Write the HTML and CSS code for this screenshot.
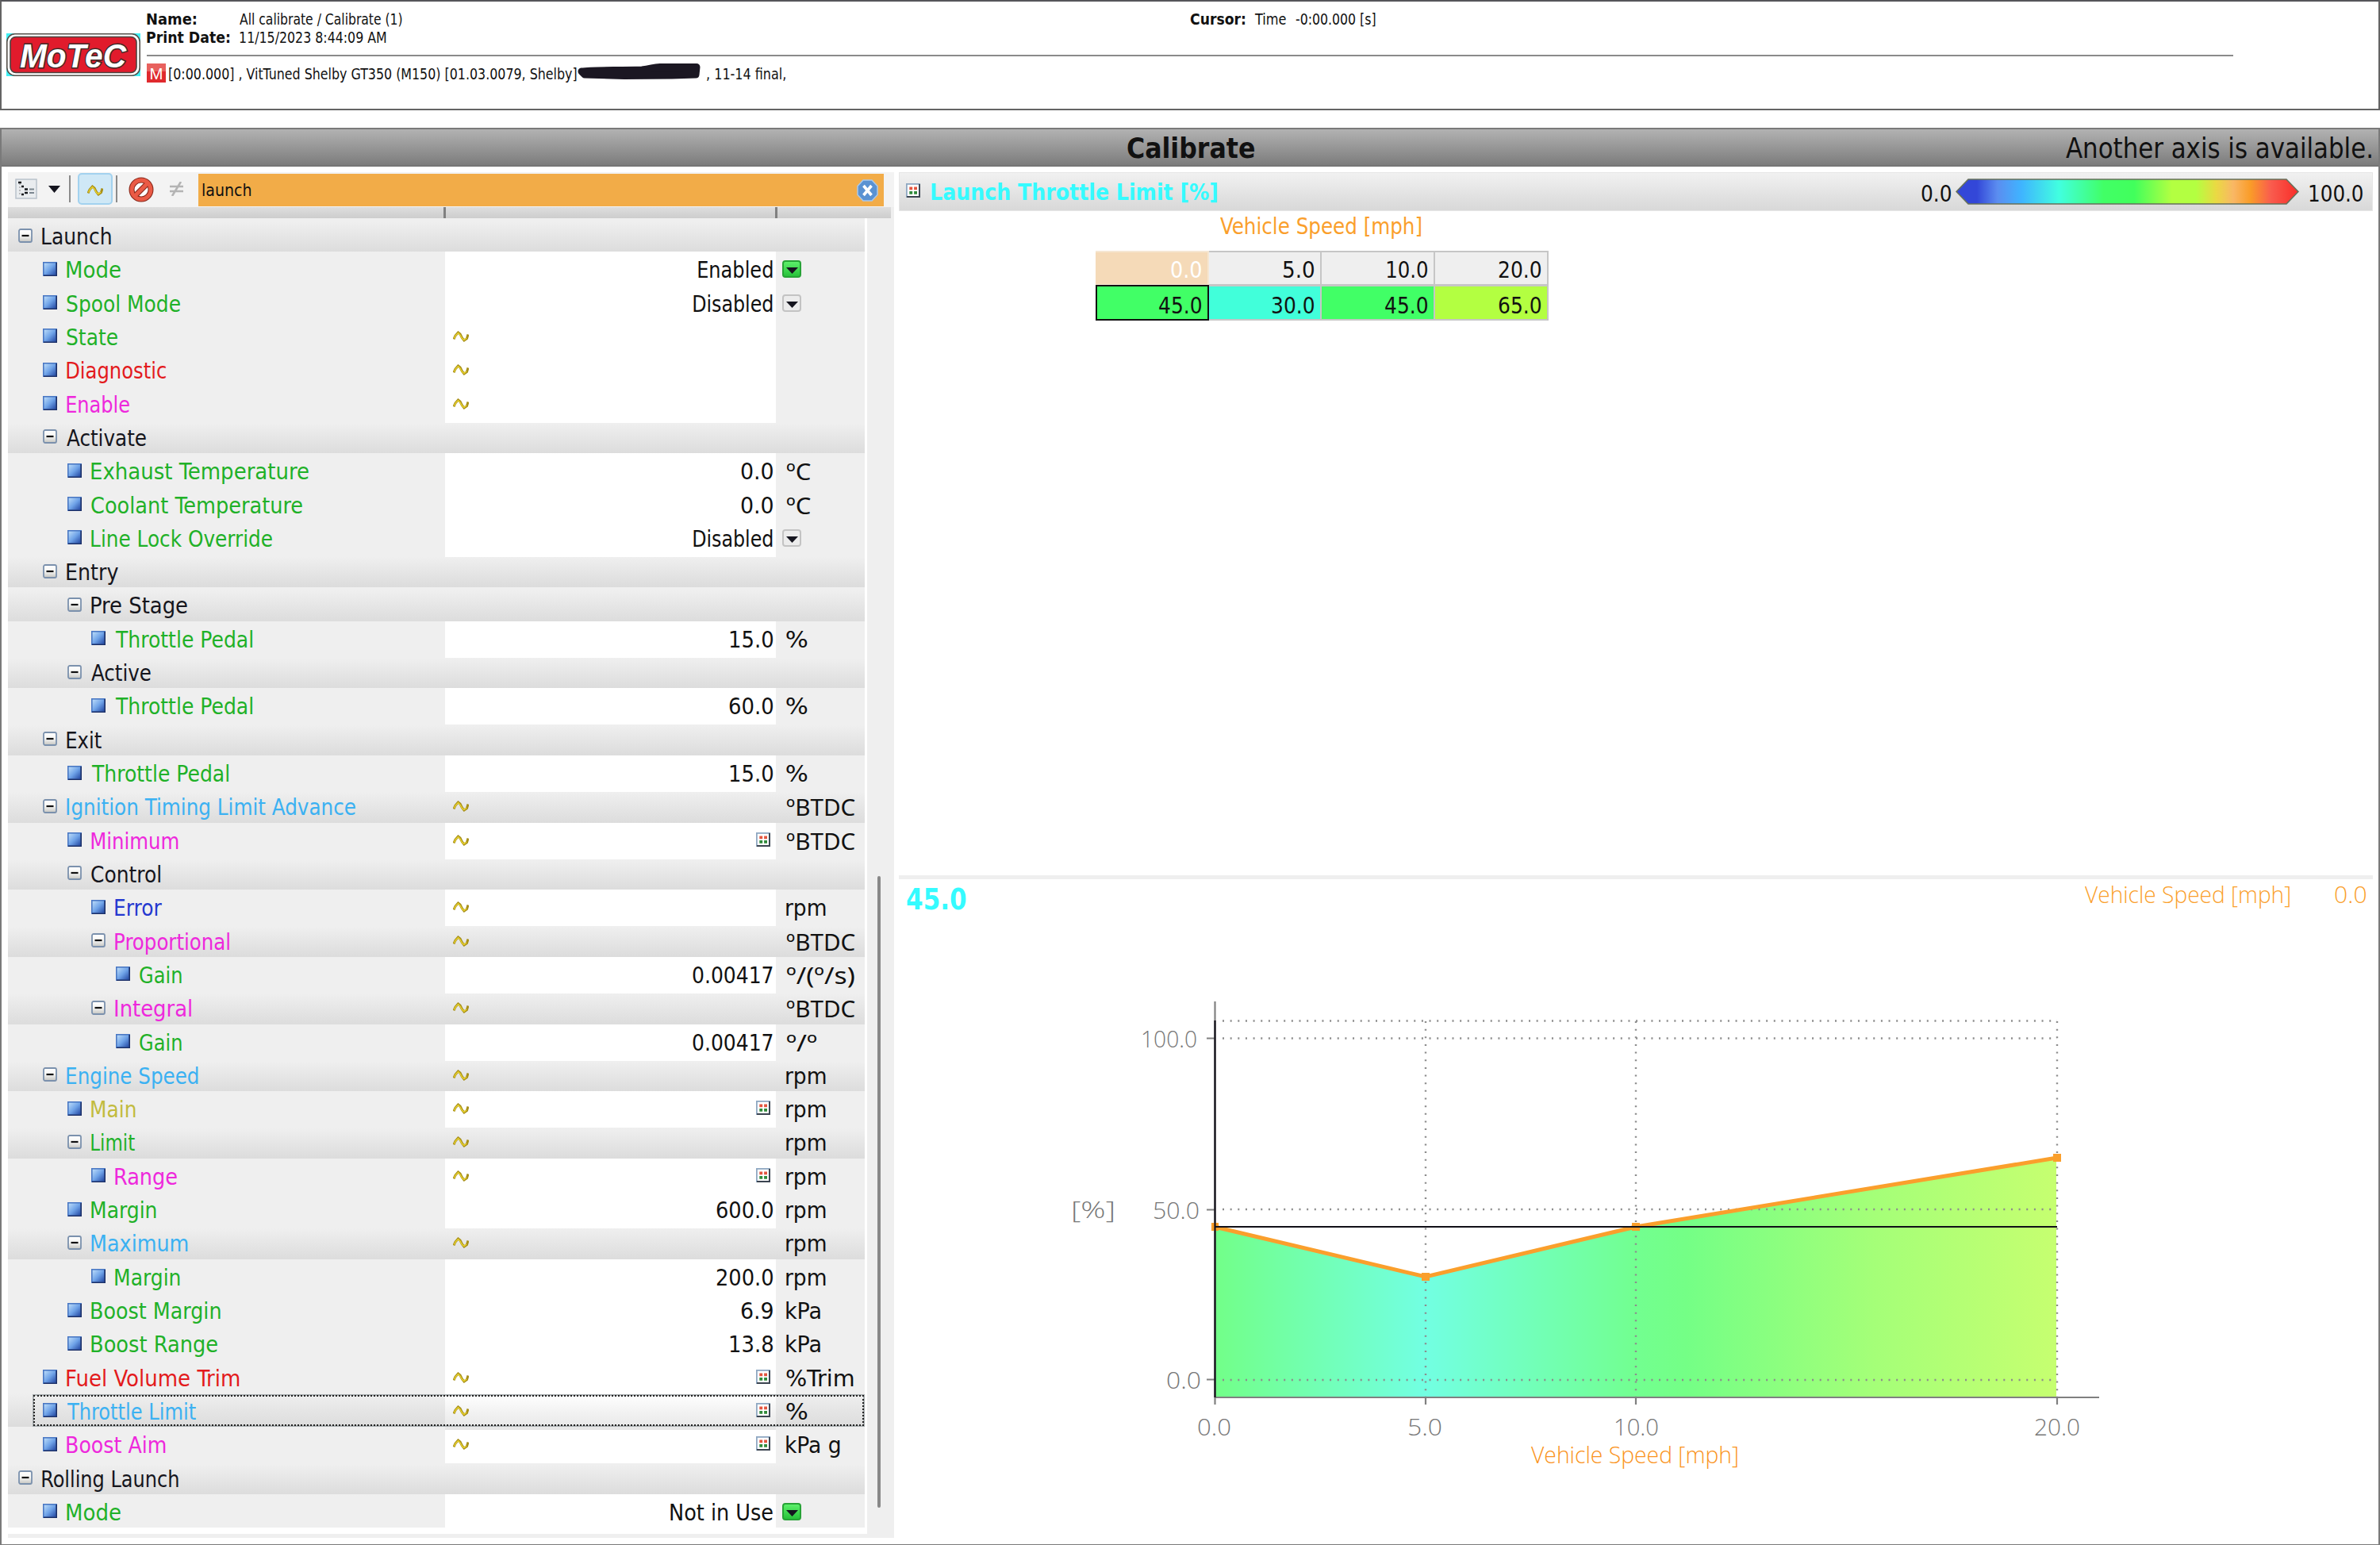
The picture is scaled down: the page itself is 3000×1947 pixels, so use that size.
FILE: index.html
```html
<!DOCTYPE html>
<html lang="en">
<head>
  <meta charset="UTF-8" />
  <title>Calibrate</title>
  <link rel="stylesheet" href="styles.css">
</head>
<body>
  <!-- Shared icons -->
  <svg class="defs" width="0" height="0">
    <defs>
      <linearGradient id="blueGrad" x1="0" y1="0" x2="1" y2="1">
        <stop offset="0" stop-color="#c4e2fb"/>
        <stop offset="0.5" stop-color="#6fa3e8"/>
        <stop offset="1" stop-color="#1c3f9c"/>
      </linearGradient>
      <linearGradient id="boxGrad" x1="0" y1="0" x2="0" y2="1">
        <stop offset="0" stop-color="#fff"/>
        <stop offset="0.5" stop-color="#f6f6f4"/>
        <stop offset="1" stop-color="#c4c4c0"/>
      </linearGradient>
    </defs>
    <symbol id="i-leaf" viewBox="0 0 18 18">
      <rect x="0.8" y="0.8" width="16.4" height="16.4" fill="url(#blueGrad)" stroke="#4a78c4" stroke-width="1.6"/>
      <path d="M1 17.2H17.2V1" fill="none" stroke="#1b2f68" stroke-width="1.6"/>
    </symbol>
    <symbol id="i-minus" viewBox="0 0 18 18">
      <rect x="1" y="1" width="16" height="16" rx="2" fill="url(#boxGrad)" stroke="#7b91ad" stroke-width="1.8"/>
      <path d="M4.5 9H13.5" stroke="#111" stroke-width="2.2"/>
    </symbol>
    <symbol id="i-wave" viewBox="0 0 20 14">
      <path d="M1 10.5L3 6L6.500 2L9 4L11.500 9L14 12L17.500 9.500L19 4.500" fill="none" stroke="#a8901a" stroke-width="3"/>
      <path d="M1.500 9.500L3.500 5.500L6.500 2.500L9 5L11.500 9.500L14 11.500L17 9" fill="none" stroke="#f0da30" stroke-width="1.200"/>
    </symbol>
    <symbol id="i-grid" viewBox="0 0 18 18">
      <rect x="0.900" y="0.900" width="16.200" height="16.200" fill="#fff" stroke="#8fa8c2" stroke-width="1.800"/>
      <path d="M1 17H17V1" fill="none" stroke="#3b4450" stroke-width="1.900"/>
      <path d="M4.300 4.500h3.900v3.700h-3.900zM10.100 4.500h3.900v3.700h-3.900z" fill="#e2553f"/>
      <path d="M4.300 10.100h3.900v3.700h-3.900zM10.100 10.100h3.900v3.700h-3.900z" fill="#2f8a3a"/>
    </symbol>
  </svg>

  <!-- Print header -->
  <header class="print-head">
    <svg class="logo" width="169" height="54" viewBox="0 0 169 54">
      <rect width="169" height="54" fill="#3ff0f5"/>
      <rect x="0.8" y="0.800" width="167.400" height="52.400" rx="10" fill="#fff" stroke="#55504a" stroke-width="1.600"/>
      <rect x="5" y="4.500" width="159" height="45" rx="7" fill="#e11b2c" stroke="#4c4440" stroke-width="1.600"/>
      <text class="logo-text" x="17" y="42.500" textLength="134" lengthAdjust="spacingAndGlyphs">MoTeC</text>
    </svg>
    <div class="head-info">
      <div class="meta">
        <b class="k" data-w="62">Name:</b><span data-w="205">All calibrate / Calibrate (1)</span>
        <b class="k" data-w="104">Print Date:</b><span data-w="185">11/15/2023 8:44:09 AM</span>
      </div>
      <div class="cursor"><b data-w="69">Cursor:</b><span data-w="40">Time</span><span data-w="101">-0:00.000 [s]</span></div>
      <div class="session">
        <svg width="24" height="24" viewBox="0 0 24 24"><rect width="24" height="24" fill="#e02a2e"/><rect width="24" height="10" fill="#ee8e86" opacity="0.550"/><text class="m-text" x="3.500" y="20" textLength="17" lengthAdjust="spacingAndGlyphs">M</text></svg>
        <span data-w="514">[0:00.000] , VitTuned Shelby GT350 (M150) [01.03.0079, Shelby]</span>
        <svg class="marker" width="157" height="22" viewBox="0 0 157 22"><path d="M6 10C20 8 50 9 82 8C94 7 98 4 108 4.500H151L150 14L120 15L60 15.500L10 14Z" fill="#1b1722" stroke="#1b1722" stroke-width="9" stroke-linejoin="round"/></svg>
        <span data-w="99">, 11-14 final,</span>
      </div>
    </div>
  </header>

  <main class="window">
    <div class="title-bar">
      <span class="title" data-w="160">Calibrate</span>
      <span class="note" data-w="385">Another axis is available.</span>
    </div>

    <div class="panes">
      <!-- Parameter tree -->
      <section class="tree-pane">
        <div class="toolbar">
          <svg class="t-tree" width="28" height="26" viewBox="0 0 28 26">
            <rect x="1" y="1" width="26" height="24" fill="#e9ecef" stroke="#b9c2cb" stroke-width="1.500"/>
            <path d="M4 5H8M8 10H11M8 20H11M12 13.500H16M12 18H16" stroke="#15181c" stroke-width="2.400"/>
            <path d="M6 6V21" stroke="#888" stroke-width="1" stroke-dasharray="2 2"/>
            <path d="M18 13.500H24M18 18H24" stroke="#7c8790" stroke-width="2"/>
          </svg>
          <svg class="t-arrow" width="15" height="9" viewBox="0 0 15 9"><path d="M0 0H15L7.500 9Z" fill="#15151f"/></svg>
          <i class="sep"></i>
          <span class="t-wave"><svg width="20" height="14"><use href="#i-wave"/></svg></span>
          <i class="sep"></i>
          <svg class="t-ban" width="32" height="32" viewBox="0 0 32 32">
            <circle cx="16" cy="16" r="12" fill="#fff" stroke="#8a2a1c" stroke-width="7"/>
            <path d="M8 24L24 8" stroke="#8a2a1c" stroke-width="7"/>
            <circle cx="16" cy="16" r="12" fill="none" stroke="#ea5a45" stroke-width="4.800"/>
            <path d="M7.500 24.500L24.500 7.500" stroke="#ea5a45" stroke-width="4.800"/>
          </svg>
          <svg class="t-ne" width="17" height="18" viewBox="0 0 17 18"><path d="M0 6H17M0 12H17M14 0L3 18" stroke="#b4b4b4" stroke-width="2.600"/></svg>
          <div class="search">
            <span data-w="61">launch</span>
            <svg width="27" height="28" viewBox="0 0 27 28"><path d="M8 1H19L26 8.500V19.500L19 27H8L1 19.500V8.500Z" fill="#5a92d2" stroke="#a9c8ea" stroke-width="1.500"/><path d="M8.500 8L18.500 20M18.500 8L8.500 20" stroke="#fff" stroke-width="3.600"/></svg>
          </div>
        </div>
        <div class="col-head"><i></i><i></i></div>
        <div class="tree-body">
          <div class="tree" id="tree"></div>
          <div class="scroll"><div class="thumb"></div></div>
        </div>
      </section>

      <!-- Table and graph -->
      <section class="data-pane">
        <div class="data-head">
          <svg width="18" height="18"><use href="#i-grid"/></svg>
          <b class="data-title" data-w="360">Launch Throttle Limit [%]</b>
          <span data-w="37">0.0</span>
          <svg class="scale" width="433" height="33" viewBox="0 0 433 33">
            <defs>
              <linearGradient id="rainbow">
                <stop offset="0.060" stop-color="#3347d8"/><stop offset="0.120" stop-color="#5b8df0"/>
                <stop offset="0.190" stop-color="#3fb4ff"/><stop offset="0.300" stop-color="#41ffe0"/>
                <stop offset="0.430" stop-color="#41ff66"/><stop offset="0.520" stop-color="#41ff5c"/>
                <stop offset="0.630" stop-color="#b3ff41"/><stop offset="0.700" stop-color="#b3ff41"/>
                <stop offset="0.760" stop-color="#ead943"/><stop offset="0.810" stop-color="#f9b765"/>
                <stop offset="0.860" stop-color="#fa9c28"/><stop offset="0.920" stop-color="#f95c4e"/>
                <stop offset="1" stop-color="#f92c28"/>
              </linearGradient>
            </defs>
            <path d="M1 16.500L16 1H417L432 16.500L417 32H16Z" fill="url(#rainbow)" stroke="#66705a" stroke-width="1.600"/>
          </svg>
          <span data-w="67">100.0</span>
        </div>
        <div class="table-area">
          <div class="axis-name"><span data-w="253">Vehicle Speed [mph]</span></div>
          <div class="lut">
            <div class="cell head picked"><span data-w="38">0.0</span></div>
            <div class="cell head"><span data-w="38">5.0</span></div>
            <div class="cell head"><span data-w="51">10.0</span></div>
            <div class="cell head"><span data-w="53">20.0</span></div>
            <div class="cell v45 current"><span data-w="53">45.0</span></div>
            <div class="cell v30"><span data-w="53">30.0</span></div>
            <div class="cell v45"><span data-w="53">45.0</span></div>
            <div class="cell v65"><span data-w="53">65.0</span></div>
          </div>
        </div>
        <div class="graph-area">
          <div class="graph-head">
            <b data-w="75">45.0</b>
            <span class="g-axis" data-w="258">Vehicle Speed [mph]</span>
            <span class="g-val" data-w="39">0.0</span>
          </div>
          <!-- 531px per 10 mph, 4.300px per percent -->
          <svg class="graph" width="1858" height="770" viewBox="1133 1168 1858 770">
            <defs>
              <linearGradient id="fill" gradientUnits="userSpaceOnUse" x1="1531" y1="0" x2="2593" y2="0">
                <stop offset="0" stop-color="#72ff88"/><stop offset="0.250" stop-color="#72ffe2"/>
                <stop offset="0.500" stop-color="#72ff90"/><stop offset="0.560" stop-color="#74ff86"/>
                <stop offset="0.780" stop-color="#a4ff78"/><stop offset="1" stop-color="#c6ff70"/>
              </linearGradient>
            </defs>
            <path d="M1531 1546L1797 1609L2062 1546L2592 1459V1761H1531Z" fill="url(#fill)"/>
            <path class="dots" d="M1541 1286.500H2593M1541 1308.500H2593M1541 1524H2593M1541 1739H2593"/>
            <path class="dots" d="M1797 1287V1761M2062 1287V1761M2593 1287V1761"/>
            <path class="axis" d="M1531.500 1262V1770M1521 1308.500H1531M1521 1524.500H1531M1521 1738.500H1531M1531 1761H2646M1797 1761V1770M2062 1761V1770M2593 1761V1770"/>
            <path d="M1531 1546L1797 1609L2062 1546L2593 1459" fill="none" stroke="#fa9f2c" stroke-width="5"/>
            <path d="M1527 1541h9v10h-9zM1792 1604h10v10h-10zM2057 1541h10v10h-10zM2588 1454h10v10h-10z" fill="#fa9f2c"/>
            <path d="M1531.500 1286V1761M1531 1546H2593" stroke="#111018" stroke-width="2.200"/>
            <g class="g-labels">
              <text x="1438" y="1319.500" textLength="71" lengthAdjust="spacingAndGlyphs">100.0</text>
              <text x="1453" y="1535.500" textLength="59" lengthAdjust="spacingAndGlyphs">50.0</text>
              <text x="1470" y="1749.500" textLength="44" lengthAdjust="spacingAndGlyphs">0.0</text>
              <text x="1350" y="1535" textLength="56" lengthAdjust="spacingAndGlyphs">[%]</text>
              <text x="1509" y="1809" textLength="43" lengthAdjust="spacingAndGlyphs">0.0</text>
              <text x="1774" y="1809" textLength="44" lengthAdjust="spacingAndGlyphs">5.0</text>
              <text x="2034" y="1809" textLength="57" lengthAdjust="spacingAndGlyphs">10.0</text>
              <text x="2564" y="1809" textLength="58" lengthAdjust="spacingAndGlyphs">20.0</text>
              <text class="g-x" x="1930" y="1844" textLength="262" lengthAdjust="spacingAndGlyphs">Vehicle Speed [mph]</text>
            </g>
          </svg>
        </div>
      </section>
    </div>
  </main>
  <script src="script.js"></script>
</body>
</html>
```

FILE: styles.css
```css
/* RESET & BASE */
* { margin: 0; padding: 0; box-sizing: border-box; }
body {
  width: 3000px; height: 1947px;
  display: flex; flex-direction: column;
  background: #fff; color: #111;
  font-family: 'DejaVu Sans Condensed', 'DejaVu Sans', sans-serif;
  font-size: 29px;
  overflow: hidden;
}
svg { display: block; flex: none; }
.defs { position: absolute; }
[data-w] { display: inline-block; flex: none; white-space: nowrap; }
.glyphs { display: inline-block; transform-origin: 0 50%; }

/* PRINT HEADER */
.print-head {
  height: 139px; flex: none;
  display: flex;
  border: 2px solid #646464;
  border-top-color: #55555a;
  font-size: 19px; line-height: 23px;
}
.logo { margin: 40px 0 0 6px; }
.logo-text {
  font: italic bold 43px 'Liberation Sans', sans-serif;
  fill: #fff; stroke: #3f2a28; stroke-width: 3px; paint-order: stroke;
}
.m-text { font: 21px 'Liberation Sans', sans-serif; fill: #fff; }
.head-info {
  width: 2630px; margin-left: 8px; padding-top: 11px;
  display: grid;
  grid-template-columns: 1315px 1fr;
  grid-template-rows: 58px 1fr;
}
.meta {
  display: grid; grid-template-columns: 117px 1fr;
  grid-template-rows: 23px 23px;
}
.cursor { display: flex; gap: 12px; }
.head-info > .meta, .head-info > .cursor { border-bottom: 2px solid #8a8a8a; }
.session {
  grid-column: 1 / 3; padding-top: 9px;
  display: flex; line-height: 27px;
}
.session > span:nth-of-type(1) { margin-left: 4px; }
.session > span:nth-of-type(2) { margin-left: 6px; }
.marker { margin: 0 1px 0 0; }

/* WINDOW */
.window {
  flex: 1; margin-top: 22px;
  display: flex; flex-direction: column;
  border: 2px solid #7a7a7a;
}
.title-bar {
  height: 47px; flex: none;
  display: grid; grid-template-columns: 1fr auto 1fr;
  padding-right: 9px;
  line-height: 49px;
  background: linear-gradient(#b2b2b2, #7c7c7c);
  border-bottom: 2px solid #757575;
}
.title { grid-column: 2; font-size: 35px; font-weight: bold; margin-left: 11px; }
.note { justify-self: end; font-size: 35px; }
.panes { flex: 1; display: flex; padding: 7px 7px 8px 8px; }

/* TREE PANE */
.tree-pane {
  width: 1117px; flex: none;
  display: flex; flex-direction: column;
  background: #efefef;
}
.toolbar {
  height: 44px; flex: none;
  display: flex; align-items: flex-start;
  background: #f3f3f3;
}
.t-tree { margin: 8px 0 0 9px; }
.t-arrow { margin: 17px 11px 0 14px; }
.sep { width: 2px; height: 34px; margin-top: 4px; background: #8b8b8b; }
.t-wave {
  width: 44px; height: 40px; margin: 1px 4px 0 9px; padding: 13px 10px;
  background: #cfe8f6; border: 2px solid #a3d2ef; border-radius: 5px;
}
.t-ban { margin: 6px 0 0 14px; }
.t-ne { margin: 12px 19px 0 20px; }
.search {
  width: 864px; height: 41px; margin-top: 2px; padding: 0 7px 0 5px;
  display: flex; justify-content: space-between; align-items: center;
  background: #f2ac48;
  font-size: 22px;
}
.col-head {
  width: 1113px; height: 14px; flex: none;
  display: flex; padding-left: 549px; gap: 415px;
  background: linear-gradient(#dedede, #cdcdcd);
}
.col-head i { width: 3px; background: #808080; }
.tree-body { flex: 1; display: flex; }
.tree { width: 1083px; height: 1658px; background: #fff; padding-right: 3px; }
.row {
  height: 42.32px;
  display: grid; grid-template-columns: 551px 417px 1fr;
  background: #efefef;
  line-height: 46px;
}
.row.group { background: linear-gradient(#efefef 10%, #dcdcdc); }
.name { display: flex; }
.name svg { margin: 12.5px 12px 0 0; }
.val { background: #fff; display: flex; padding-right: 4px; }
.group .val { background: none; }
.val .wave { margin: 15px 0 0 10px; }
.val .num { margin-left: auto; display: flex; }
.val .grid { margin: 12px 3px 0 auto; }
.unit { padding-left: 13px; display: flex; }
.unit .deg { font-family: 'Noto Sans', 'Open Sans', sans-serif; }
.drop {
  width: 24px; height: 22px; margin: 11px 0 0 -5px; padding: 7px 2px;
  background: #ececec; border: 2px solid #c3c3c3; border-radius: 4px;
}
.drop svg { margin-left: 1px; }
.drop.set { background: linear-gradient(#5cf06a, #27c23a); border-color: #27a336; }
.row.selected {
  position: relative;
  background: linear-gradient(#efefef, #dcdcdc);
}
.row.selected .val { background: linear-gradient(#fff, #e6e6e6); }
.row.selected .focus {
  position: absolute; left: 31px; right: 0; top: 1px; bottom: 0;
  border: 2px solid #a9aeb0;
}
.row.selected .focus::after {
  content: ''; position: absolute; inset: -1px;
  border: 2px dotted #222;
}
.c-black { color: #15151c; }
.c-green { color: #1fb128; }
.c-red { color: #e31a1c; }
.c-pink { color: #ee28dc; }
.c-cyan { color: #3bb1f2; }
.c-blue { color: #2438d0; }
.c-olive { color: #c2bb3e; }

.scroll { flex: 1; padding: 829px 0 0 13px; }
.thumb { width: 4px; height: 796px; background: #888; border-radius: 2px; }

/* DATA PANE */
.data-pane { flex: 1; margin-left: 6px; display: flex; flex-direction: column; }
.data-head {
  height: 49px; flex: none; padding: 0 12px 0 8px;
  display: flex; line-height: 53px;
  background: linear-gradient(#f1f1f1, #d8d8d8);
  border: 1px solid #e6e6e6;
}
.data-head > svg:first-child { margin: 13px 14px 0 0; }
.data-title { color: #35fbff; margin-right: auto; margin-top: -2px; }
.scale { margin: 7px 13px 0 6px; }
.table-area {
  height: 837px; flex: none; padding-left: 248px;
}
.axis-name { height: 50px; padding-left: 157px; line-height: 38px; color: #fa9f2c; }
.lut {
  width: 571px;
  display: grid; grid-template-columns: 143px 142px 143px 143px;
  grid-template-rows: 43px 45px;
}
.cell {
  display: flex; justify-content: flex-end; padding-right: 8px;
  border: 2px solid #c6c6c6; border-left-width: 0;
  line-height: 48px;
}
.cell.head { background: #efefef; border-bottom-width: 1px; line-height: 45px; }
.cell.picked { background: #f5dab8; color: #fff; border-color: #f5e6d2; }
.v45 { background: #41ff66; }
.v30 { background: #41ffda; }
.v65 { background: #b3ff41; }
.cell.current { border: 2px solid #111; }

/* GRAPH */
.graph-area { flex: 1; border-top: 5px solid #efefef; }
.graph-head {
  height: 60px; padding: 0 9px 0 10px;
  display: flex; line-height: 38px;
  color: #fa9f2c; font-weight: 300;
}
.graph-head > b { color: #35fbff; font-size: 38px; line-height: 51px; font-weight: bold; }
.g-axis { margin: 0 57px 0 auto; }
.dots { fill: none; stroke: #8c8c8c; stroke-width: 2.4; stroke-dasharray: 2 7.65; }
.axis { fill: none; stroke: #808080; stroke-width: 2.2; }
.g-labels { fill: #777; font-weight: 300; }
.g-labels .g-x { fill: #fa9320; }
.g-axis, .g-val, .g-labels { font-family: 'Open Sans', 'Noto Sans', sans-serif; }
```

FILE: script.js
```js
// [level, kind, name, width, colour, wave, value, width, unit, width]
// kind: g = group, l = leaf; value 'grid' is a table icon, unit 'drop' / 'set' a list button
const rows = [
  [0, 'g', 'Launch', 87, 'black'],
  [1, 'l', 'Mode', 68, 'green', 0, 'Enabled', 94, 'set'],
  [1, 'l', 'Spool Mode', 143, 'green', 0, 'Disabled', 100, 'drop'],
  [1, 'l', 'State', 64, 'green', 1],
  [1, 'l', 'Diagnostic', 125, 'red', 1],
  [1, 'l', 'Enable', 79, 'pink', 1],
  [1, 'g', 'Activate', 100, 'black'],
  [2, 'l', 'Exhaust Temperature', 274, 'green', 0, '0.0', 40, 'ºC', 31],
  [2, 'l', 'Coolant Temperature', 266, 'green', 0, '0.0', 40, 'ºC', 31],
  [2, 'l', 'Line Lock Override', 228, 'green', 0, 'Disabled', 100, 'drop'],
  [1, 'g', 'Entry', 65, 'black'],
  [2, 'g', 'Pre Stage', 121, 'black'],
  [3, 'l', 'Throttle Pedal', 173, 'green', 0, '15.0', 54, '%', 27],
  [2, 'g', 'Active', 75, 'black'],
  [3, 'l', 'Throttle Pedal', 173, 'green', 0, '60.0', 55, '%', 27],
  [1, 'g', 'Exit', 44, 'black'],
  [2, 'l', 'Throttle Pedal', 173, 'green', 0, '15.0', 54, '%', 27],
  [1, 'g', 'Ignition Timing Limit Advance', 364, 'cyan', 1, '', 0, 'ºBTDC', 87],
  [2, 'l', 'Minimum', 110, 'pink', 1, 'grid', 0, 'ºBTDC', 87],
  [2, 'g', 'Control', 87, 'black'],
  [3, 'l', 'Error', 59, 'blue', 1, '', 0, 'rpm', 50],
  [3, 'g', 'Proportional', 144, 'pink', 1, '', 0, 'ºBTDC', 87],
  [4, 'l', 'Gain', 53, 'green', 0, '0.00417', 101, 'º/(º/s)', 86],
  [3, 'g', 'Integral', 96, 'pink', 1, '', 0, 'ºBTDC', 87],
  [4, 'l', 'Gain', 53, 'green', 0, '0.00417', 101, 'º/º', 38],
  [1, 'g', 'Engine Speed', 166, 'cyan', 1, '', 0, 'rpm', 50],
  [2, 'l', 'Main', 56, 'olive', 1, 'grid', 0, 'rpm', 50],
  [2, 'g', 'Limit', 55, 'green', 1, '', 0, 'rpm', 50],
  [3, 'l', 'Range', 78, 'pink', 1, 'grid', 0, 'rpm', 50],
  [2, 'l', 'Margin', 82, 'green', 0, '600.0', 71, 'rpm', 50],
  [2, 'g', 'Maximum', 122, 'cyan', 1, '', 0, 'rpm', 50],
  [3, 'l', 'Margin', 82, 'green', 0, '200.0', 71, 'rpm', 50],
  [2, 'l', 'Boost Margin', 163, 'green', 0, '6.9', 40, 'kPa', 43],
  [2, 'l', 'Boost Range', 159, 'green', 0, '13.8', 54, 'kPa', 43],
  [1, 'l', 'Fuel Volume Trim', 218, 'red', 1, 'grid', 0, '%Trim', 85],
  [1, 'l', 'Throttle Limit', 163, 'cyan', 1, 'grid', 0, '%', 27, 'selected'],
  [1, 'l', 'Boost Aim', 125, 'pink', 1, 'grid', 0, 'kPa g', 68],
  [0, 'g', 'Rolling Launch', 172, 'black'],
  [1, 'l', 'Mode', 68, 'green', 0, 'Not in Use', 129, 'set']
];

const icon = (id, w, h, cls) =>
  `<svg class="${cls || ''}" width="${w}" height="${h}"><use href="#i-${id}"/></svg>`;
const arrow = '<svg width="15" height="8" viewBox="0 0 15 8"><path d="M0 0H15L7.5 8Z" fill="#15151f"/></svg>';

document.getElementById('tree').innerHTML = rows.map(r => {
  const [level, kind, name, nameW, color, wave, value, valueW, unit, unitW, state] = r;
  let val = wave ? icon('wave', 20, 14, 'wave') : '';
  if (value === 'grid') val += icon('grid', 18, 18, 'grid');
  else if (value) val += `<span class="num"><span data-w="${valueW}">${value}</span></span>`;
  let u = '';
  if (unit === 'drop' || unit === 'set') u = `<span class="drop ${unit}">${arrow}</span>`;
  else if (unit) u = `<span class="${unit[0] === 'º' ? 'deg' : ''}" data-w="${unitW}">${unit}</span>`;
  return `<div class="row ${kind === 'g' ? 'group' : ''} ${state || ''}">
    <div class="name c-${color}" style="padding-left:${13 + level * 30.8}px">${icon(kind === 'g' ? 'minus' : 'leaf', 18, 18)}<span data-w="${nameW}">${name}</span></div>
    <div class="val">${val}</div><div class="unit">${u}</div>${state ? '<div class="focus"></div>' : ''}</div>`;
}).join('');

// squeeze every label so that its ink is exactly data-w wide
const ctx = document.createElement('canvas').getContext('2d');
document.querySelectorAll('[data-w]').forEach(el => {
  const cs = getComputedStyle(el);
  const text = el.textContent;
  ctx.font = `${cs.fontWeight} ${cs.fontSize} ${cs.fontFamily}`;
  const m = ctx.measureText(text);
  const w = +el.dataset.w;
  const s = w / (m.actualBoundingBoxLeft + m.actualBoundingBoxRight);
  const inner = document.createElement('span');
  inner.className = 'glyphs';
  inner.textContent = text;
  inner.style.transform = `translateX(${m.actualBoundingBoxLeft * s}px) scaleX(${s})`;
  el.textContent = '';
  el.appendChild(inner);
  el.style.width = w + 'px';
});
```
